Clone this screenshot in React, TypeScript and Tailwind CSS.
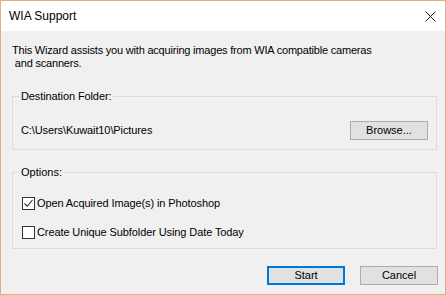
import React from "react";

const font = { fontFamily: '"Liberation Sans", Arial, sans-serif' };

function CheckRow({ checked, label }: { checked: boolean; label: string }) {
  return (
    <label className="flex h-[13px] items-center gap-[2px]">
      <span className="flex h-[13px] w-[13px] items-center justify-center border border-[#333333] bg-white">
        {checked && (
          <svg width="11" height="11" viewBox="0 0 11 11">
            <path d="M1.5 5.5 L4.2 8.3 L9.5 2" fill="none" stroke="#222" strokeWidth="1.1" />
          </svg>
        )}
      </span>
      <span className="text-[11px] leading-[13px] tracking-[-0.1px] text-black">{label}</span>
    </label>
  );
}

function Button({ label, primary }: { label: string; primary?: boolean }) {
  return (
    <button
      className={
        primary
          ? "h-[19px] w-[78px] border-2 border-[#0078d7] bg-[#e1e1e1] text-[11px] leading-none text-black"
          : "h-[19px] w-[78px] border border-[#adadad] bg-[#e1e1e1] text-[11px] leading-none text-black"
      }
    >
      {label}
    </button>
  );
}

export default function App() {
  return (
    <div
      className="flex h-[295px] w-[446px] flex-col border border-[#e0b07c] bg-[#f0f0f0]"
      style={font}
    >
      <div className="flex h-[30px] shrink-0 items-center justify-between bg-white pl-[8px] pr-[9px]">
        <span className="text-[12px] text-black">WIA Support</span>
        <svg width="11" height="11" viewBox="0 0 11 11">
          <path d="M0.5 0.5 L10.5 10.5 M10.5 0.5 L0.5 10.5" stroke="#111" strokeWidth="1" />
        </svg>
      </div>

      <div className="flex flex-col pl-[11px]">
        <p className="mt-[13px] whitespace-pre text-[11px] leading-[13px] tracking-[-0.2px] text-black">
          {"This Wizard assists you with acquiring images from WIA compatible cameras\n and scanners."}
        </p>

        <fieldset className="mt-[20px] w-[425px] border border-[#dcdcdc]">
          <legend className="ml-[6px] px-[2px] text-[11px] leading-[13px] tracking-[-0.1px] text-black">
            Destination Folder:
          </legend>
          <div className="mt-[18px] mb-[9px] flex items-center justify-between pl-[8px] pr-[8px]">
            <span className="text-[11px] tracking-[-0.1px] text-black">C:\Users\Kuwait10\Pictures</span>
            <Button label="Browse..." />
          </div>
        </fieldset>

        <fieldset className="mt-[16px] w-[425px] border border-[#dcdcdc]">
          <legend className="ml-[6px] px-[2px] text-[11px] leading-[13px] text-black">
            Options:
          </legend>
          <div className="mt-[18px] mb-[9px] flex flex-col gap-[16px] pl-[9px]">
            <CheckRow checked label="Open Acquired Image(s) in Photoshop" />
            <CheckRow checked={false} label="Create Unique Subfolder Using Date Today" />
          </div>
        </fieldset>

        <div className="mt-[17px] flex justify-end gap-[15px] pr-[7px]">
          <Button label="Start" primary />
          <Button label="Cancel" />
        </div>
      </div>
    </div>
  );
}
